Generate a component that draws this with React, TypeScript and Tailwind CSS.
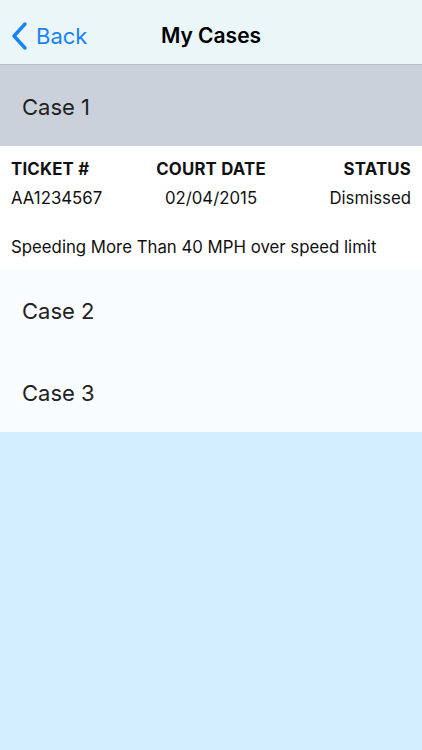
import React from 'react'

const font = {fontFamily: 'Inter, "Liberation Sans", Arial, sans-serif'}

const cases = ['Case 2', 'Case 3']

export default function App() {
  return (
    <div className="flex h-[750px] w-[422px] flex-col bg-[#d3effd]" style={font}>
      {/* nav bar */}
      <header className="relative flex h-[65px] items-center justify-center border-b border-[#b9bec5] bg-[#ebf6f9] pt-[7px]">
        <button className="absolute left-[10px] top-[21px] flex items-center gap-[8px] text-[#1a82f7]">
          <svg width="18" height="30" viewBox="0 0 18 30" fill="none">
            <path d="M15 3 L4 15 L15 27" stroke="currentColor" strokeWidth="3.4" strokeLinecap="round" strokeLinejoin="round" />
          </svg>
          <span className="text-[22px] leading-none">Back</span>
        </button>
        <h1 className="text-[21px] font-semibold text-black">My Cases</h1>
      </header>

      {/* expanded case */}
      <div className="flex h-[81px] items-center bg-[#cbd1da] px-[22px] pt-[4px]">
        <span className="text-[22px] text-[#222]">Case 1</span>
      </div>
      <section className="h-[122px] bg-white px-[11px] pt-[11px] text-[16.8px] leading-[24px] text-[#111]">
        <div className="grid grid-cols-[1fr_auto_1fr] font-bold tracking-[0.2px]">
          <span>TICKET #</span>
          <span className="text-center">COURT DATE</span>
          <span className="text-right">STATUS</span>
        </div>
        <div className="mt-[5px] grid grid-cols-3">
          <span>AA1234567</span>
          <span className="text-center">02/04/2015</span>
          <span className="text-right">Dismissed</span>
        </div>
        <p className="mt-[25px]">Speeding More Than 40 MPH over speed limit</p>
      </section>

      {/* collapsed cases */}
      <div className="bg-[#fafdff]">
        {cases.map((c) => (
          <div key={c} className="flex h-[82px] items-center px-[22px] pt-[4px]">
            <span className="text-[22px] text-[#222]">{c}</span>
          </div>
        ))}
      </div>
    </div>
  )
}
